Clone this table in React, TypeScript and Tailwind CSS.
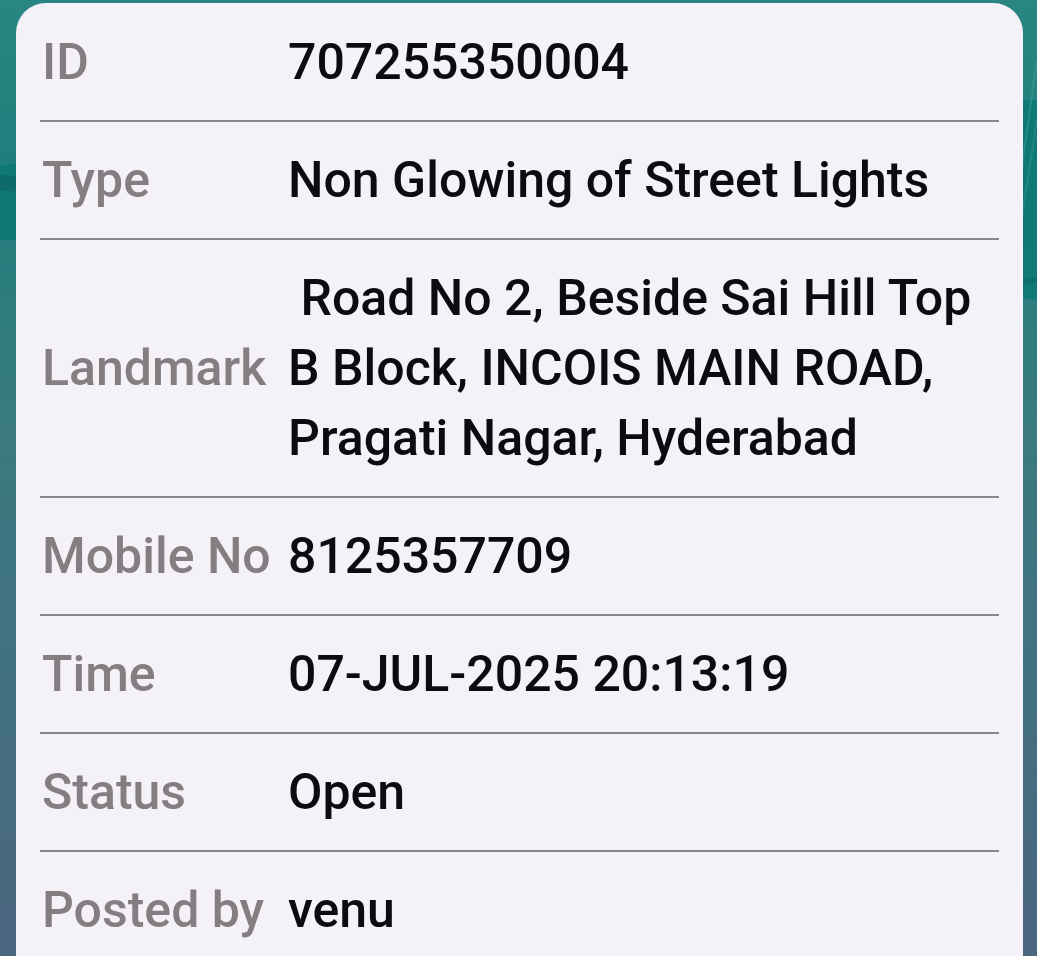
const rows: { label: string; value: string }[] = [
  { label: "ID", value: "707255350004" },
  { label: "Type", value: "Non Glowing of Street Lights" },
  {
    label: "Landmark",
    value: " Road No 2, Beside Sai Hill Top B Block, INCOIS MAIN ROAD, Pragati Nagar, Hyderabad",
  },
  { label: "Mobile No", value: "8125357709" },
  { label: "Time", value: "07-JUL-2025 20:13:19" },
  { label: "Status", value: "Open" },
  { label: "Posted by", value: "venu" },
];

function Backdrop() {
  return (
    <svg
      className="absolute inset-0 h-full w-full"
      viewBox="0 0 1037 956"
      preserveAspectRatio="none"
    >
      <defs>
        <linearGradient id="bg" x1="0" y1="0" x2="0" y2="1">
          <stop offset="0" stopColor="#2a8682" />
          <stop offset="0.17" stopColor="#1f7f7c" />
          <stop offset="0.45" stopColor="#3a7a80" />
          <stop offset="1" stopColor="#4b6680" />
        </linearGradient>
      </defs>
      <rect width="1037" height="956" fill="url(#bg)" />
      <path d="M0 165 C 300 150, 700 120, 1037 100 L1037 300 C 700 250, 300 230, 0 240 Z" fill="#0a7773" opacity="0.8" />
      <path d="M0 175 C 40 178, 60 182, 80 186 L80 200 C 50 196, 20 192, 0 190 Z" fill="#0b5e5e" opacity="0.5" />
      <path d="M1037 280 C 900 300, 800 310, 700 320" stroke="#0c6565" strokeWidth="4" fill="none" opacity="0.6" />
      <path d="M1037 60 L 1010 250" stroke="#4fa09c" strokeWidth="2" opacity="0.4" />
      <path d="M1037 120 L 1015 260" stroke="#4fa09c" strokeWidth="2" opacity="0.3" />
    </svg>
  );
}

export default function App() {
  return (
    <main
      className="relative h-[956px] w-full overflow-hidden"
      style={{ fontFamily: "Roboto, 'Noto Sans', sans-serif" }}
    >
      <Backdrop />
      <div className="relative z-10 ml-4 mr-[14px] mt-[3px] h-[1000px] rounded-t-[30px] bg-[#f5f1f8] px-6 pt-px">
        {rows.map((row, i) => (
          <div key={row.label}>
            {i > 0 && <div className="h-[2px] bg-[#8c878b]" />}
            <div className="flex items-center py-[23px] text-[50px] font-medium leading-[70px]">
              <div className="w-[248px] shrink-0 pl-[2px] text-[#847e80]">
                {row.label}
              </div>
              <div className="min-w-0 flex-1 whitespace-pre-wrap pr-2 text-[#0d0b10]">
                {row.value}
              </div>
            </div>
          </div>
        ))}
      </div>
    </main>
  );
}
